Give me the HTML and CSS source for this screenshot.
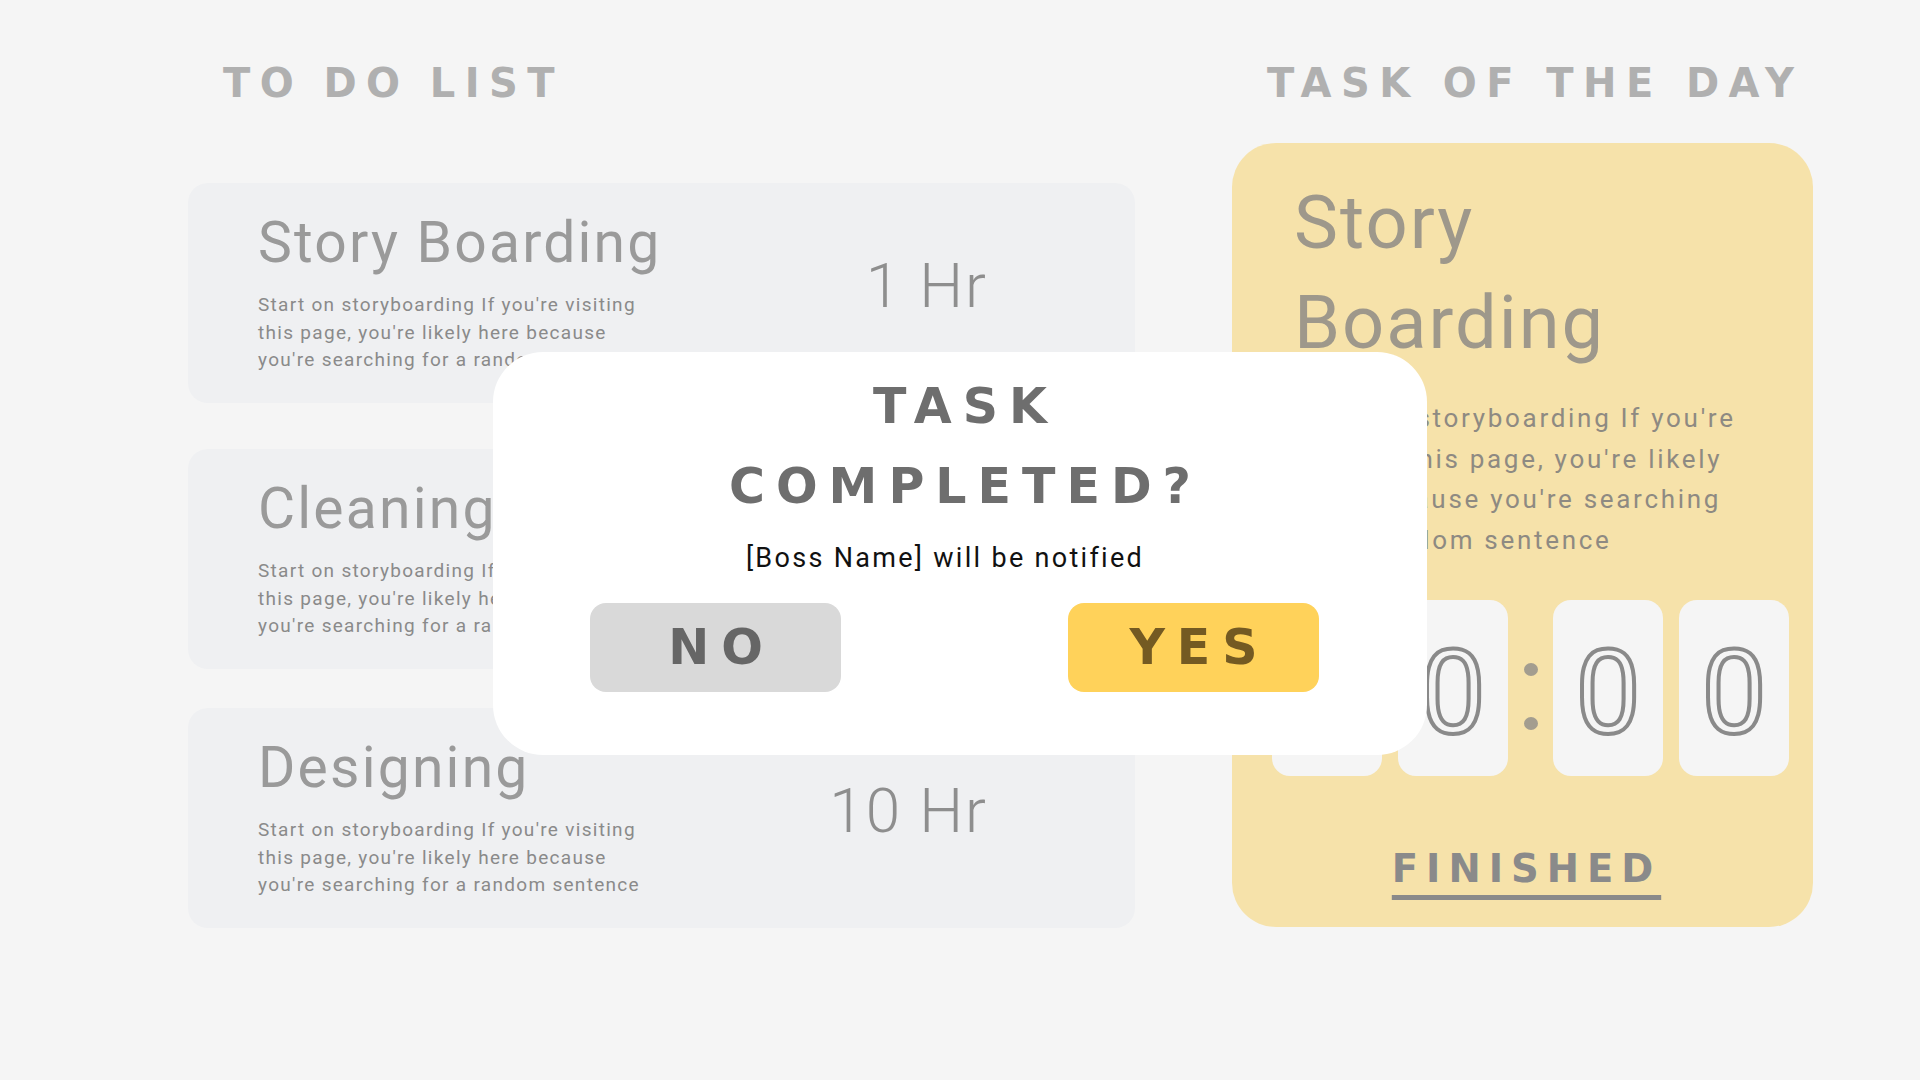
FILE: index.html
```html
<!DOCTYPE html>
<html lang="en">

<head>
    <meta charset="UTF-8">
    <meta name="viewport" content="width=device-width, initial-scale=1.0">
    <title>To Do List</title>

    <link rel="stylesheet" href="styles.css">
</head>

<body>

    <main class="board">
        <section class="todo">
            <h2 class="section-title todo-title">TO DO LIST</h2>
            <div class="task-list">
                <article class="task">
                    <div class="task-info">
                        <h3 class="task-name">Story Boarding</h3>
                        <p class="task-desc">Start on storyboarding If you're visiting this page, you're likely here because you're searching for a random sentence</p>
                    </div>
                    <span class="task-hours">1 Hr</span>
                </article>
                <article class="task">
                    <div class="task-info">
                        <h3 class="task-name">Cleaning</h3>
                        <p class="task-desc">Start on storyboarding If you're visiting this page, you're likely here because you're searching for a random sentence</p>
                    </div>
                    <span class="task-hours">2 Hr</span>
                </article>
                <article class="task">
                    <div class="task-info">
                        <h3 class="task-name">Designing</h3>
                        <p class="task-desc">Start on storyboarding If you're visiting this page, you're likely here because you're searching for a random sentence</p>
                    </div>
                    <span class="task-hours">10 Hr</span>
                </article>
            </div>
        </section>

        <section class="today">
            <h2 class="section-title today-title">TASK OF THE DAY</h2>
            <div class="today-card">
                <h3 class="today-name">Story Boarding</h3>
                <p class="today-desc">Start on storyboarding If you're visiting this page, you're likely here because you're searching for a random sentence</p>
                <div class="timer">
                    <span class="digit">0</span>
                    <span class="digit">0</span>
                    <span class="colon"><i></i><i></i></span>
                    <span class="digit">0</span>
                    <span class="digit">0</span>
                </div>
                <div class="finish-row">
                    <button class="finish-button">FINISHED</button>
                </div>
            </div>
        </section>
    </main>

    <!-- Confirmacion -->
    <div class="modal">
        <h2 class="modal-title">TASK<br>COMPLETED?</h2>
        <p class="modal-text">[Boss Name] will be notified</p>
        <div class="modal-actions">
            <button class="modal-button no-button">NO</button>
            <button class="modal-button yes-button">YES</button>
        </div>
    </div>

</body>

</html>
```

FILE: styles.css
```css
/* Base */
body {
    margin: 0;
    background-color: #f5f5f5;
    font-family: Roboto, "Liberation Sans", sans-serif;
}

h2,
h3,
p {
    margin: 0;
    font-weight: normal;
}

button {
    border: none;
    font-family: inherit;
    cursor: pointer;
}

.board {
    display: flex;
    gap: 97px;
    padding: 63px 0 0 188px;
}

.section-title {
    font-family: "DejaVu Sans", sans-serif;
    font-weight: bold;
    font-size: 40px;
    line-height: 40px;
    letter-spacing: 9.4px;
    color: #b0b0b0;
}

/* Lista */
.todo {
    width: 947px;
}

.todo-title {
    padding-left: 35px;
    word-spacing: -3px;
}

.task-list {
    margin-top: 80px;
}

.task {
    display: flex;
    justify-content: space-between;
    align-items: flex-start;
    height: 220px;
    box-sizing: border-box;
    padding: 26px 147px 0 70px;
    background-color: #eff0f2;
    border-radius: 20px;
}

.task + .task {
    margin-top: 46px;
}

.task:last-child {
    margin-top: 39px;
}

.task-name {
    font-size: 57px;
    line-height: 68px;
    letter-spacing: 2.2px;
    color: #9a9a9a;
}

.task-desc {
    width: 400px;
    margin-top: 14px;
    font-size: 19px;
    line-height: 27.5px;
    letter-spacing: 1.3px;
    color: #8a8a8a;
}

.task-hours {
    margin-top: 40px;
    font-size: 62px;
    font-weight: 300;
    line-height: 74px;
    letter-spacing: 2px;
    color: #8e8e8e;
}

/* Tarea del dia */
.today {
    width: 581px;
}

.today-title {
    padding-left: 35px;
}

.today-card {
    height: 784px;
    box-sizing: border-box;
    margin-top: 40px;
    padding: 30px 62px 0;
    background-color: #f6e2aa;
    border-radius: 44px;
}

.today-name {
    font-size: 74px;
    line-height: 100px;
    letter-spacing: 2px;
    color: #9e988b;
}

.today-desc {
    width: 460px;
    margin-top: 25px;
    font-size: 26px;
    line-height: 40.5px;
    letter-spacing: 2.7px;
    color: #8e8a82;
}

.timer {
    display: flex;
    gap: 16px;
    margin: 40px -40px 0 -22px;
}

.digit {
    display: flex;
    flex: none;
    justify-content: center;
    align-items: center;
    width: 110px;
    height: 176px;
    box-sizing: border-box;
    padding-top: 10px;
    background-color: #f5f5f5;
    border-radius: 18px;
    font-size: 116px;
    line-height: 1;
    color: transparent;
    -webkit-text-stroke: 4px #8a8a8a;
}

.colon {
    display: flex;
    flex: none;
    flex-direction: column;
    justify-content: center;
    align-items: center;
    gap: 41px;
    width: 13px;
    padding-top: 17px;
}

.colon i {
    width: 14px;
    height: 13px;
    border-radius: 50%;
    background-color: #a39d8f;
}

.finish-row {
    margin-top: 74px;
    text-align: center;
}

.finish-button {
    padding: 0 0 0 8px;
    background: none;
    font-family: "DejaVu Sans", sans-serif;
    font-weight: bold;
    font-size: 38.5px;
    line-height: 38.5px;
    letter-spacing: 8px;
    color: #8a8a8a;
    text-decoration: underline;
    text-decoration-thickness: 5px;
    text-underline-offset: 13px;
}

/* Ventana de confirmacion */
.modal {
    position: fixed;
    top: 352px;
    left: 493px;
    width: 934px;
    height: 403px;
    box-sizing: border-box;
    padding-top: 15px;
    background-color: #fff;
    border-radius: 50px;
    text-align: center;
}

.modal-title {
    padding-left: 11px;
    font-family: "DejaVu Sans", sans-serif;
    font-weight: bold;
    font-size: 49px;
    line-height: 80px;
    letter-spacing: 11px;
    color: #6e6e6e;
}

.modal-text {
    margin-top: 15px;
    padding-right: 30px;
    font-size: 27px;
    line-height: 32px;
    letter-spacing: 2.3px;
    color: #111;
}

.modal-actions {
    display: flex;
    justify-content: space-between;
    margin-top: 29px;
    padding: 0 108px 0 97px;
}

.modal-button {
    width: 251px;
    height: 89px;
    padding: 0 0 0 12px;
    border-radius: 16px;
    font-family: "DejaVu Sans", sans-serif;
    font-weight: bold;
    font-size: 49px;
    letter-spacing: 12px;
}

.no-button {
    background-color: #d9d9d9;
    color: #666;
}

.yes-button {
    background-color: #ffd25a;
    color: #745a22;
}
```
